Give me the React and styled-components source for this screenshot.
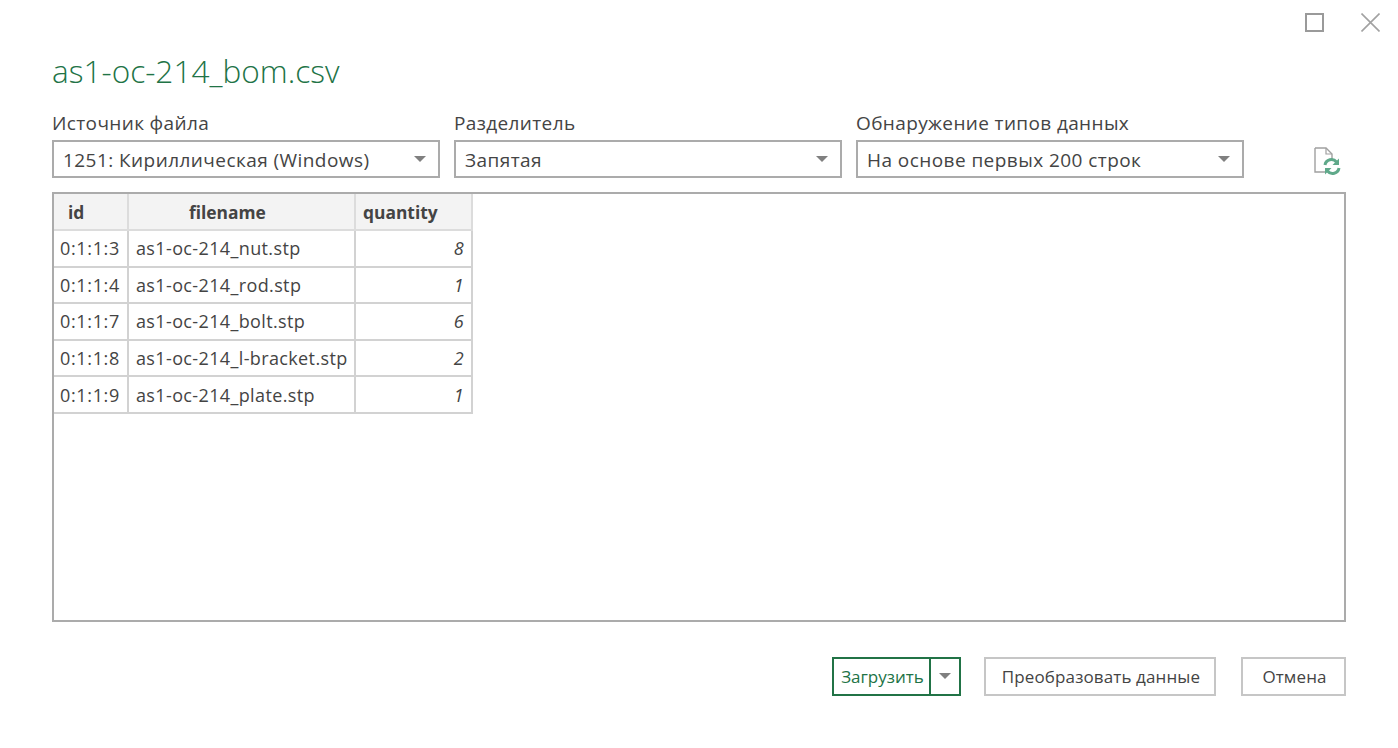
import React from "react";
import styled, { createGlobalStyle } from "styled-components";

const Global = createGlobalStyle`
  html, body { margin: 0; padding: 0; background: #fff; }
  body { font-family: "Open Sans", "Noto Sans", sans-serif; color: #444; }
`;
const Page = styled.div`
  width: 1398px; height: 748px; box-sizing: border-box; overflow: hidden;
  padding: 13px 18px 0 52px; display: flex; flex-direction: column;
`;
const WindowBar = styled.div`
  display: flex; justify-content: flex-end; gap: 37px; height: 19px;
`;
const Title = styled.h1`
  margin: 16px 0 0; height: 46px; font-size: 31.6px; line-height: 46px; font-weight: 300;
  color: #217346;
`;
const Selectors = styled.div`
  display: flex; gap: 14px; margin-top: 17px; align-items: flex-end;
`;
const Field = styled.div`
  width: 388px; display: flex; flex-direction: column;
`;
const Label = styled.div`
  font-size: 19px; line-height: 25px; height: 29px; color: #444; letter-spacing: 0.37px;
`;
const Select = styled.div`
  height: 38px; box-sizing: border-box; border: 2px solid #ababab; display: flex; align-items: center;
  justify-content: space-between; padding: 1px 12px 0 9px; font-size: 19px; color: #444; letter-spacing: 0.44px;
`;
const Caret = styled.span`
  width: 0; height: 0; margin-top: -1px; border-left: 6px solid transparent; border-right: 6px solid transparent;
  border-top: 6px solid #808080; display: block;
`;
const RefreshSlot = styled.div`
  margin-left: 55px; height: 38px; display: flex; align-items: center; padding-top: 3px; box-sizing: border-box;
`;
const Preview = styled.div`
  margin-top: 14px; margin-right: 34px; height: 430px; box-sizing: border-box; border: 2px solid #ababab;
`;
const Grid = styled.table`
  border-collapse: collapse; table-layout: fixed; width: 418px; margin: 0;
  font-size: 18px; letter-spacing: 0.37px; color: #444;
`;
const Head = styled.th`
  height: 35px; padding: 0 0 0 ${p => p.$pad}px; background: #f3f3f3; border: 2px solid #dcdcdc; border-top: 0; border-left: 0;
  font-weight: 700; font-size: 17.4px; letter-spacing: 0; text-align: left;
`;
const Cell = styled.td`
  height: 34.6px; box-sizing: content-box; padding: 0 ${p => (p.$num ? 7 : 0)}px 0 ${p => (p.$num ? 0 : p.$first ? 6 : 7)}px;
  border: 2px solid #d2d2d2; border-left: ${p => (p.$first ? 0 : "2px solid #d2d2d2")}; white-space: nowrap;
  letter-spacing: ${p => (p.$first ? "0.65px" : "0.37px")};
  text-align: ${p => (p.$num ? "right" : "left")}; font-style: ${p => (p.$num ? "italic" : "normal")};
`;
const Actions = styled.div`
  display: flex; justify-content: flex-end; gap: 25px; margin: 35px 34px 0 0;
`;
const SplitButton = styled.div`
  height: 39px; box-sizing: border-box; border: 2px solid #217346; display: flex; align-items: stretch; font-size: 17px;
  margin-right: -2px;
`;
const SplitMain = styled.span`
  width: 97px; display: flex; align-items: center; justify-content: center; color: #217346; border-right: 2px solid #217346;
  box-sizing: border-box; padding-left: 2px;
`;
const SplitArrow = styled.span`
  width: 28px; display: flex; align-items: center; justify-content: center;
`;
const Button = styled.div`
  height: 39px; box-sizing: border-box; border: 2px solid #c6c6c6; display: flex; align-items: center; justify-content: center;
  width: ${p => p.$w}px; font-size: 17px; color: #444; letter-spacing: 0.12px; padding-left: 2px;
`;

const rows = [
  ["0:1:1:3", "as1-oc-214_nut.stp", 8],
  ["0:1:1:4", "as1-oc-214_rod.stp", 1],
  ["0:1:1:7", "as1-oc-214_bolt.stp", 6],
  ["0:1:1:8", "as1-oc-214_l-bracket.stp", 2],
  ["0:1:1:9", "as1-oc-214_plate.stp", 1],
];

const RefreshIcon = () => (
  <svg width="28" height="30" viewBox="0 0 28 30" fill="none">
    <path d="M2 2h11l6 6v6M2 2v24h10" stroke="#a0a0a0" strokeWidth="1.4" />
    <path d="M13 2v6h6" stroke="#a0a0a0" strokeWidth="1.2" />
    <path d="M12 19a6.500 6.500 0 0 1 11.500-3" stroke="#5fa98a" strokeWidth="3" />
    <path d="M26 12.500v6.500h-6.500z" fill="#5fa98a" />
    <path d="M26 22a6.500 6.500 0 0 1-11.500 3" stroke="#5fa98a" strokeWidth="3" />
    <path d="M12 28.500V22h6.500z" fill="#5fa98a" />
  </svg>
);

export default function App() {
  return (
    <Page>
      <Global />
      <WindowBar>
        <svg width="19" height="19" viewBox="0 0 19 19"><rect x="1" y="1" width="17" height="17" fill="none" stroke="#9a9a9a" strokeWidth="2" /></svg>
        <svg width="19" height="19" viewBox="0 0 19 19"><path d="M.5.5l18 18M18.500.5l-18 18" stroke="#a2a2a2" strokeWidth="1.6" /></svg>
      </WindowBar>
      <Title>as1-oc-214_bom.csv</Title>
      <Selectors>
        <Field><Label>Источник файла</Label><Select>1251: Кириллическая (Windows)<Caret /></Select></Field>
        <Field><Label>Разделитель</Label><Select>Запятая<Caret /></Select></Field>
        <Field><Label>Обнаружение типов данных</Label><Select>На основе первых 200 строк<Caret /></Select></Field>
        <RefreshSlot><RefreshIcon /></RefreshSlot>
      </Selectors>
      <Preview>
        <Grid>
          <colgroup><col style={{ width: 74 }} /><col style={{ width: 227 }} /><col style={{ width: 117 }} /></colgroup>
          <thead>
            <tr>
              <Head $pad={14}>id</Head>
              <Head $pad={60}>filename</Head>
              <Head $pad={7}>quantity</Head>
            </tr>
          </thead>
          <tbody>
            {rows.map(r => (
              <tr key={r[0]}>
                <Cell $first>{r[0]}</Cell>
                <Cell>{r[1]}</Cell>
                <Cell $num>{r[2]}</Cell>
              </tr>
            ))}
          </tbody>
        </Grid>
      </Preview>
      <Actions>
        <SplitButton>
          <SplitMain>Загрузить</SplitMain>
          <SplitArrow><Caret /></SplitArrow>
        </SplitButton>
        <Button $w={232}>Преобразовать данные</Button>
        <Button $w={105}>Отмена</Button>
      </Actions>
    </Page>
  );
}
